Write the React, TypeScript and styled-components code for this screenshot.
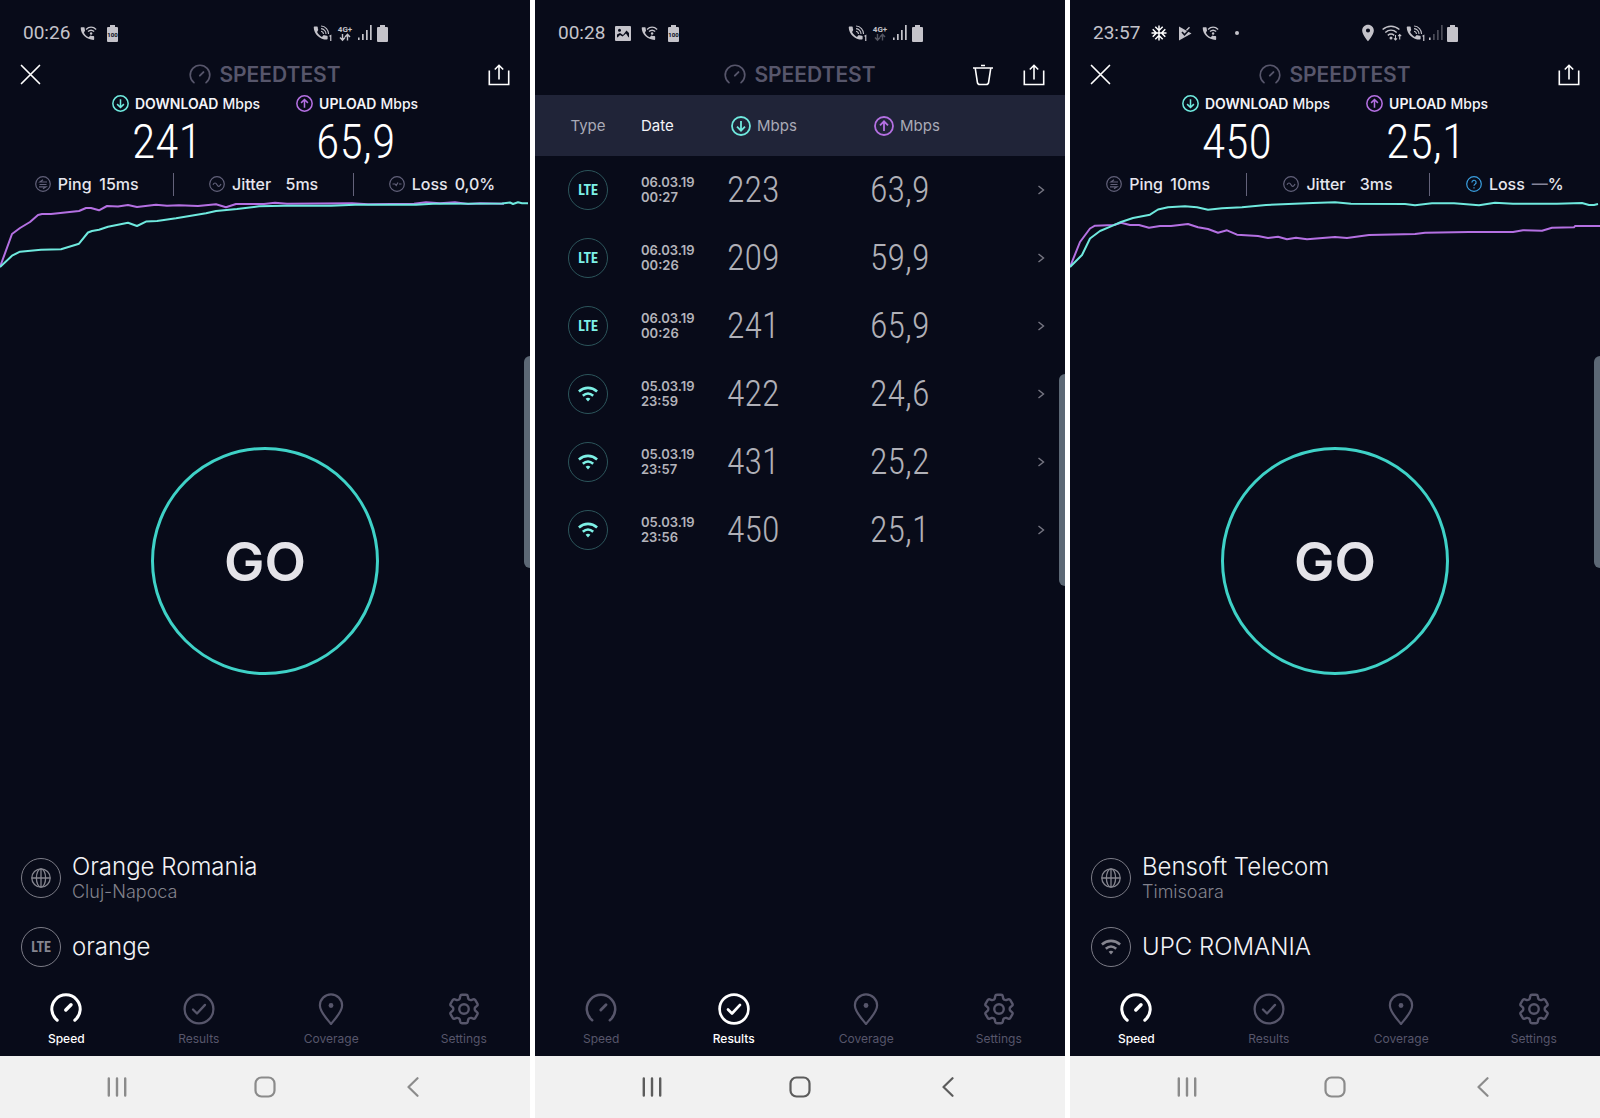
import React from 'react';
import styled, { createGlobalStyle } from 'styled-components';
import { MdAcUnit, MdLocationOn } from 'react-icons/md';
import { HiOutlineCog6Tooth } from 'react-icons/hi2';

const color = {
  bg: '#080b19',
  band: '#202438',
  muted: '#57566b',
  text: '#e6e6ee',
  teal: '#6fe9de',
  purple: '#b470e2',
};

const digits = `"Roboto Condensed", "Liberation Sans Narrow", Roboto, sans-serif`;

const GlobalStyle = createGlobalStyle`
  * { box-sizing: border-box; }
  body {
    margin: 0;
    background: #ffffff;
    font-family: Inter, "Open Sans", sans-serif;
  }
  button {
    padding: 0;
    border: 0;
    background: none;
    color: inherit;
    font: inherit;
    cursor: pointer;
  }
  svg { display: block; flex: none; }
`;

const Board = styled.main`
  display: grid;
  grid-template-columns: repeat(3, minmax(0, 1fr));
  gap: 5px;
  min-height: 100vh;
`;

const Phone = styled.section`
  position: relative;
  display: flex;
  flex-direction: column;
  background: ${color.bg};
  color: ${color.text};
`;

const EdgeHandle = styled.span<{ $top: number }>`
  position: absolute;
  right: 0;
  top: ${(p) => p.$top}px;
  width: 6px;
  height: 212px;
  border-radius: 6px 0 0 6px;
  background: #5c6875;
`;

const StatusBar = styled.div`
  display: flex;
  align-items: center;
  justify-content: space-between;
  height: 54px;
  padding: 12px 142px 0 23px;
  color: #c4c3ca;
`;

const StatusGroup = styled.div<{ $gap: number }>`
  display: flex;
  align-items: center;
  gap: ${(p) => p.$gap}px;
`;

const Clock = styled.time`
  font: 400 19px/24px Roboto, sans-serif;
`;

const Dot = styled.span`
  width: 4px;
  height: 4px;
  margin-left: 6px;
  border-radius: 50%;
  background: currentColor;
`;

const TopBar = styled.header`
  display: grid;
  grid-template-columns: 1fr auto 1fr;
  align-items: center;
  height: 41px;
  padding: 0 20px;
  color: #ffffff;
`;

const Brand = styled.h1`
  display: flex;
  align-items: center;
  gap: 8px;
  margin: 0;
  color: ${color.muted};
  font-size: 21px;
  line-height: 24px;
  font-weight: 600;
`;

const Actions = styled.div`
  display: flex;
  justify-content: flex-end;
  gap: 29px;
`;

const IconButton = styled.button`
  display: flex;
  justify-self: start;
`;

const Speeds = styled.div`
  display: flex;
  justify-content: center;
  gap: 36px;
`;

const SpeedLabel = styled.div`
  display: flex;
  align-items: center;
  gap: 6px;
  color: #f4f4f8;
  font-size: 14px;
  line-height: 17px;
  font-weight: 500;
`;

const LabelText = styled.span`
  display: flex;
  gap: 4px;
`;

const Name = styled.span`
  font-weight: 600;
`;

const SpeedValue = styled.div`
  padding-left: 20px;
  color: #ffffff;
  font-family: ${digits};
  font-size: 48px;
  line-height: 60px;
  font-weight: 300;
`;

const Stats = styled.div`
  display: flex;
  align-items: center;
  justify-content: space-evenly;
  height: 28px;
  padding-bottom: 4px;
  font-size: 16px;
  line-height: 20px;
  font-weight: 500;
`;

const Stat = styled.div`
  display: flex;
  align-items: center;
  gap: 7px;
`;

const StatValue = styled.span<{ $timed?: boolean }>`
  min-width: ${(p) => (p.$timed ? 40 : 0)}px;
  text-align: right;
`;

const Missing = styled.span`
  color: #85859a;
`;

const Divider = styled.span`
  width: 1px;
  height: 23px;
  background: #63627a;
`;

const Chart = styled.svg`
  width: 100%;
  height: 70px;
`;

const GoArea = styled.div`
  display: flex;
  flex: 1;
  align-items: center;
  justify-content: center;
`;

const GoButton = styled.button`
  width: 228px;
  height: 228px;
  border: 3px solid #3fd2c7;
  border-radius: 50%;
  color: #e5e4e9;
  font-size: 54px;
  font-weight: 600;
`;

const Providers = styled.div`
  display: flex;
  flex-direction: column;
  gap: 18px;
  padding: 0 21px;
`;

const Provider = styled.div`
  display: flex;
  align-items: center;
  gap: 11px;
  height: 52px;

  & + & {
    height: 50px;
  }
`;

const Badge = styled.span<{ $tone: 'teal' | 'grey' }>`
  display: inline-flex;
  align-items: center;
  justify-content: center;
  width: 40px;
  height: 40px;
  border: 1px solid ${(p) => (p.$tone === 'teal' ? '#2c555b' : '#7c7c87')};
  border-radius: 50%;
  color: ${(p) => (p.$tone === 'teal' ? '#7df0e6' : '#85858f')};
  font: 700 14px/20px ${digits};
`;

const ProviderName = styled.div`
  color: #f2f2f5;
  font-size: 24px;
  line-height: 28px;
  font-weight: 300;
`;

const ProviderCity = styled.div`
  color: #82828c;
  font-size: 18px;
  line-height: 22px;
  font-weight: 300;
`;

const Tabs = styled.nav`
  display: grid;
  grid-template-columns: repeat(4, 1fr);
  height: 84px;
`;

const Tab = styled.button<{ $active: boolean }>`
  display: flex;
  flex-direction: column;
  align-items: center;
  gap: 6px;
  padding-top: 21px;
  color: ${(p) => (p.$active ? '#ffffff' : color.muted)};
  font-size: 12px;
  line-height: 16px;
  font-weight: ${(p) => (p.$active ? 500 : 400)};
`;

const TabGlyph = styled.span`
  display: flex;
  align-items: center;
  justify-content: center;
  width: 32px;
  height: 32px;
`;

const SystemBar = styled.nav<{ $dark: boolean }>`
  display: flex;
  align-items: center;
  justify-content: center;
  height: 62px;
  background: #f1f1f1;
  color: ${(p) => (p.$dark ? '#5c5c5c' : '#8b8b8b')};
`;

const SystemButton = styled.button`
  display: flex;
  align-items: center;
  justify-content: center;
  width: 148px;
  height: 62px;
`;

const Results = styled.div`
  flex: 1;
`;

const Table = styled.table`
  width: 100%;
  border-collapse: collapse;
  table-layout: fixed;
`;

const HeadRow = styled.tr`
  height: 61px;
  background: ${color.band};
`;

const HeadCell = styled.th<{ $width?: number; $center?: boolean; $strong?: boolean }>`
  width: ${(p) => (p.$width ? `${p.$width}px` : 'auto')};
  padding: 0;
  color: ${(p) => (p.$strong ? '#f4f4f8' : '#a9aab6')};
  font-size: 15px;
  font-weight: 400;
  text-align: ${(p) => (p.$center ? 'center' : 'left')};
`;

const HeadUnit = styled.span`
  display: flex;
  align-items: center;
  gap: 6px;
  padding-left: 4px;
`;

const Row = styled.tr`
  height: 68px;
`;

const Cell = styled.td<{ $center?: boolean }>`
  padding: 0;
  text-align: ${(p) => (p.$center ? 'center' : 'left')};
  vertical-align: middle;
`;

const DateCell = styled(Cell)`
  color: #b4b4bb;
  font-size: 13px;
  line-height: 15px;
  font-weight: 600;
`;

const ValueCell = styled(Cell)`
  color: #b0b0b7;
  font-family: ${digits};
  font-size: 36px;
  line-height: 40px;
  font-weight: 300;
`;

const OpenButton = styled.button`
  display: flex;
  margin-left: auto;
  margin-right: 20px;
  color: #777783;
`;

/* ---------- icons ---------- */

const Gauge = ({ size, width }: { size: number; width: number }) => (
  <svg width={size} height={size} viewBox="0 0 32 32" fill="none" stroke="currentColor" strokeWidth={width} strokeLinecap="round">
    <path d="M7.2 27.2A14.2 14.2 0 1 1 24.8 27.2" />
    <path d="M15.8 17l5.2-5.2" strokeWidth={width * 1.15} />
  </svg>
);

const CheckCircle = ({ width }: { width: number }) => (
  <svg width="32" height="32" viewBox="0 0 32 32" fill="none" stroke="currentColor" strokeWidth={width} strokeLinecap="round" strokeLinejoin="round">
    <circle cx="16" cy="16" r="14.4" />
    <path d="M10 16.500l4 4 8-8.600" />
  </svg>
);

const CoveragePin = () => (
  <svg width="32" height="32" viewBox="0 0 32 32" fill="none" stroke="currentColor" strokeWidth="2.200" strokeLinejoin="round">
    <path d="M16 31C12.500 26.500 4.900 19 4.900 12.500a11.100 11.100 0 0 1 22.200 0C27.100 19 19.500 26.500 16 31z" />
    <circle cx="16" cy="12.500" r="2.400" fill="currentColor" stroke="none" />
  </svg>
);

const CloseIcon = () => (
  <svg width="21" height="21" viewBox="0 0 21 21" stroke="currentColor" strokeWidth="1.700" strokeLinecap="round">
    <path d="M1.500 1.500l18 18M19.500 1.500l-18 18" />
  </svg>
);

const ShareIcon = () => (
  <svg width="22" height="22" viewBox="0 0 22 22" fill="none" stroke="currentColor" strokeWidth="1.600">
    <path d="M1.300 6.500v14h19.400v-14M11 15.500V1.500M6.800 5.500L11 1.300l4.200 4.200" />
  </svg>
);

const TrashIcon = () => (
  <svg width="22" height="22" viewBox="0 0 22 22" fill="none" stroke="currentColor" strokeWidth="1.600">
    <path d="M1 4h20M9 1.500h4M3.200 4l2.200 14.400a2.400 2.400 0 0 0 2.400 2.100h6.400a2.400 2.400 0 0 0 2.400-2.100L18.800 4" />
  </svg>
);

const Arrow = ({ up, size }: { up?: boolean; size: number }) => (
  <svg width={size} height={size} viewBox="0 0 20 20" fill="none" stroke={up ? color.purple : color.teal} strokeWidth="1.800">
    <circle cx="10" cy="10" r="9" />
    <path d={up ? 'M10 15V5.500M6 9.300l4-4 4 4' : 'M10 5v9.500M6 10.700l4 4 4-4'} />
  </svg>
);

type StatKind = 'ping' | 'jitter' | 'loss' | 'unknown';

const statPath: Record<StatKind, string> = {
  ping: 'M12 6H5l3-2.200M4.500 8.500h7M4 10.800h7l-3 2',
  jitter: 'M4 8.800c1.300-2.400 2.700-2.400 4 0s2.700 1.900 4-.8',
  loss: 'M3.500 8H6l1.200 1.500L9 6.500M10 8h2.500',
  unknown: 'M5.900 6.400a2.100 2.100 0 1 1 3.100 1.800c-.7.400-1 .8-1 1.600M8 11.200v1.200',
};

const StatIcon = ({ kind }: { kind: StatKind }) => (
  <svg width="16" height="16" viewBox="0 0 16 16" fill="none" stroke={kind === 'unknown' ? '#3a9fe0' : '#62617a'} strokeWidth="1.200">
    <circle cx="8" cy="8" r="7.300" />
    <path d={statPath[kind]} />
  </svg>
);

const Globe = () => (
  <svg width="20" height="20" viewBox="0 0 20 20" fill="none" stroke="currentColor" strokeWidth="1.300">
    <circle cx="10" cy="10" r="9.200" />
    <ellipse cx="10" cy="10" rx="4.600" ry="9.200" />
    <path d="M10 .8v18.400M.8 10h18.400" />
  </svg>
);

const Wifi = () => (
  <svg width="20" height="16" viewBox="0 0 20 16" fill="none" stroke="currentColor" strokeWidth="2.600">
    <path d="M.9 5.400c5.400-4.700 12.800-4.700 18.200 0M4.800 9.700c3.200-2.700 7.200-2.700 10.400 0" />
    <path d="M7.600 12.800c1.500-1.300 3.300-1.300 4.800 0L10 15.600z" fill="currentColor" stroke="none" />
  </svg>
);

const Battery = ({ label }: { label?: string }) => (
  <svg width="11" height="17" viewBox="0 0 11 17">
    <path d="M3 0h5v2h2a1 1 0 0 1 1 1v13a1 1 0 0 1-1 1H1a1 1 0 0 1-1-1V3a1 1 0 0 1 1-1h2z" fill="currentColor" />
    {label && (
      <text x="5.500" y="11.500" textAnchor="middle" fontFamily="Roboto, sans-serif" fontSize="6" fontWeight="700" fill={color.bg}>
        {label}
      </text>
    )}
  </svg>
);

const handset =
  'M5.600 10.800c1.400 2.800 3.800 5.100 6.600 6.600l2.200-2.200c.3-.3.700-.4 1-.2 1.100.4 2.300.6 3.600.6.500 0 1 .4 1 1V20c0 .6-.5 1-1 1C9.600 21 1 13.400 1 4c0-.6.500-1 1-1h3.500c.6 0 1 .4 1 1 0 1.200.2 2.400.6 3.600.1.300 0 .7-.3 1z';

const WifiCall = () => (
  <svg width="17" height="17" viewBox="0 0 24 24" fill="none" stroke="currentColor" strokeWidth="1.900">
    <path d={handset} fill="currentColor" stroke="none" />
    <path d="M8.500 6.200c4.300-4 10-4 14.300 0M11.300 9.300c2.700-2.300 6-2.300 8.700 0" />
    <circle cx="15.700" cy="12" r="1.700" fill="currentColor" stroke="none" />
  </svg>
);

const CallOne = () => (
  <svg width="19" height="18" viewBox="0 0 26 24" fill="none" stroke="currentColor" strokeWidth="1.500">
    <path d={handset} fill="currentColor" stroke="none" />
    <path d="M11 9.500a4 4 0 0 1 3.300 4M11 6a7.300 7.300 0 0 1 6.800 7.500M11 2.500A10.600 10.600 0 0 1 21.300 13.500" />
    <path d="M22.500 16.500l1.800-1V23" strokeWidth="1.700" />
  </svg>
);

const DataArrows = ({ dim }: { dim?: boolean }) => (
  <svg width="16" height="18" viewBox="0 0 16 18">
    <text x="8" y="7.500" textAnchor="middle" fontFamily="Roboto, sans-serif" fontSize="8" fontWeight="700" fill="currentColor">
      4G+
    </text>
    <path d="M5.500 10v6M3 13.500L5.500 16.200 8 13.500M10.500 16.500v-6M8 13l2.500-2.700L13 13" fill="none" stroke="currentColor" strokeWidth="1.400" opacity={dim ? 0.4 : 1} />
  </svg>
);

const Signal = ({ weak }: { weak?: boolean }) => (
  <svg width="14" height="16" viewBox="0 0 14 16" fill="currentColor">
    <rect x="0" y="12.500" width="1.600" height="2.500" />
    <g opacity={weak ? 0.35 : 1}>
      <rect x="4" y="9" width="1.700" height="6" />
      <rect x="8" y="5" width="1.700" height="10" />
      <rect x="12" y="0" width="1.700" height="15" />
    </g>
  </svg>
);

const WifiTraffic = () => (
  <svg width="20" height="16" viewBox="0 0 20 16" fill="none" stroke="currentColor" strokeWidth="1.500">
    <path d="M.6 4.500c5-4.500 11.800-4.500 16.800 0M3.300 7.500c3.400-3 8-3 11.400 0M5.800 10.300c2-1.600 4.400-1.600 6.400 0" />
    <circle cx="9" cy="13" r="1.500" fill="currentColor" stroke="none" />
    <path d="M13.500 10v5M12 13.300l1.500 1.700 1.500-1.700M17.700 14.500v-5M16.200 11.200l1.500-1.700 1.500 1.700" strokeWidth="1.100" />
  </svg>
);

const Picture = () => (
  <svg width="16" height="15" viewBox="0 0 16 15">
    <rect width="16" height="15" rx="1" fill="currentColor" />
    <circle cx="4.500" cy="4.200" r="1.500" fill={color.bg} />
    <path d="M2 11.500V8.500L5 7l3 2 3.500-4.500L14 7v4.500z" fill={color.bg} />
    <path d="M2 12l3-3 2.500 1.500L11 7.500l3 4.500z" fill="currentColor" />
  </svg>
);

const PlayCheck = () => (
  <svg width="14" height="15" viewBox="0 0 14 15">
    <path d="M1 .5L13.500 7.500 1 14.500z" fill="currentColor" />
    <path d="M4 6l2.500 2.800L12.500 2.500" fill="none" stroke={color.bg} strokeWidth="1.600" />
    <path d="M8.500 4.200l3-3" fill="none" stroke="currentColor" strokeWidth="1.500" />
  </svg>
);

const Chevron = () => (
  <svg width="8" height="10" viewBox="0 0 8 10" fill="none" stroke="currentColor" strokeWidth="1.400">
    <path d="M1.500 1L6.500 5l-5 4" />
  </svg>
);

/* ---------- shared parts ---------- */

const Logo = () => (
  <Brand>
    <Gauge size={22} width={2.4} />
    SPEEDTEST
  </Brand>
);

const tabs = ['Speed', 'Results', 'Coverage', 'Settings'] as const;
type TabName = (typeof tabs)[number];

const TabIcon = ({ name, active }: { name: TabName; active: boolean }) => {
  if (name === 'Speed') return <Gauge size={32} width={active ? 3 : 2.5} />;
  if (name === 'Results') return <CheckCircle width={active ? 2.7 : 2.3} />;
  if (name === 'Coverage') return <CoveragePin />;
  return <HiOutlineCog6Tooth size={38} strokeWidth={1.5} />;
};

const BottomTabs = ({ active }: { active: TabName }) => (
  <Tabs>
    {tabs.map((name) => (
      <Tab key={name} $active={name === active}>
        <TabGlyph>
          <TabIcon name={name} active={name === active} />
        </TabGlyph>
        {name}
      </Tab>
    ))}
  </Tabs>
);

const SystemNav = ({ dark = false }: { dark?: boolean }) => (
  <SystemBar $dark={dark}>
    <SystemButton aria-label="Recent apps">
      <svg width="20" height="20" viewBox="0 0 20 20" stroke="currentColor" strokeWidth="2.400" strokeLinecap="round">
        <path d="M1.800 1.500v17M10 1.500v17M18.200 1.500v17" />
      </svg>
    </SystemButton>
    <SystemButton aria-label="Home">
      <svg width="22" height="22" viewBox="0 0 22 22" fill="none" stroke="currentColor" strokeWidth="2.200">
        <rect x="1.500" y="1.500" width="19" height="19" rx="6" />
      </svg>
    </SystemButton>
    <SystemButton aria-label="Back">
      <svg width="12" height="20" viewBox="0 0 12 20" fill="none" stroke="currentColor" strokeWidth="2.200" strokeLinecap="round" strokeLinejoin="round">
        <path d="M10.500 1.200L1.500 10l9 8.800" />
      </svg>
    </SystemButton>
  </SystemBar>
);

const ConnectionBadge = ({ type, tone }: { type: 'lte' | 'wifi'; tone: 'teal' | 'grey' }) => (
  <Badge $tone={tone}>{type === 'lte' ? 'LTE' : <Wifi />}</Badge>
);

/* ---------- speed screen ---------- */

interface SpeedScreenProps {
  status: React.ReactNode;
  download: string;
  upload: string;
  ping: string;
  jitter: string;
  loss?: string;
  upLine: string;
  downLine: string;
  server: string;
  city: string;
  network: string;
  type: 'lte' | 'wifi';
}

const SpeedScreen = (p: SpeedScreenProps) => (
  <Phone>
    {p.status}
    <TopBar>
      <IconButton aria-label="Close"><CloseIcon /></IconButton>
      <Logo />
      <Actions>
        <IconButton aria-label="Share"><ShareIcon /></IconButton>
      </Actions>
    </TopBar>
    <Speeds>
      <div>
        <SpeedLabel><Arrow size={17} /><LabelText><Name>DOWNLOAD</Name>Mbps</LabelText></SpeedLabel>
        <SpeedValue>{p.download}</SpeedValue>
      </div>
      <div>
        <SpeedLabel><Arrow up size={17} /><LabelText><Name>UPLOAD</Name>Mbps</LabelText></SpeedLabel>
        <SpeedValue>{p.upload}</SpeedValue>
      </div>
    </Speeds>
    <Stats>
      <Stat><StatIcon kind="ping" />Ping <StatValue $timed>{p.ping}</StatValue></Stat>
      <Divider />
      <Stat><StatIcon kind="jitter" />Jitter <StatValue $timed>{p.jitter}</StatValue></Stat>
      <Divider />
      <Stat>
        <StatIcon kind={p.loss ? 'loss' : 'unknown'} />Loss
        <StatValue>{p.loss ?? <><Missing>—</Missing>%</>}</StatValue>
      </Stat>
    </Stats>
    <Chart viewBox="0 0 530 70" preserveAspectRatio="none" fill="none" strokeWidth="2" strokeLinejoin="round">
      <polyline points={p.upLine} stroke={color.purple} vectorEffect="non-scaling-stroke" />
      <polyline points={p.downLine} stroke={color.teal} vectorEffect="non-scaling-stroke" />
    </Chart>
    <GoArea><GoButton>GO</GoButton></GoArea>
    <Providers>
      <Provider>
        <Badge $tone="grey"><Globe /></Badge>
        <div>
          <ProviderName>{p.server}</ProviderName>
          <ProviderCity>{p.city}</ProviderCity>
        </div>
      </Provider>
      <Provider>
        <ConnectionBadge type={p.type} tone="grey" />
        <ProviderName>{p.network}</ProviderName>
      </Provider>
    </Providers>
    <BottomTabs active="Speed" />
    <SystemNav />
    <EdgeHandle $top={356} />
  </Phone>
);

/* ---------- results screen ---------- */

const results = [
  { type: 'lte', date: '06.03.19', time: '00:27', down: '223', up: '63,9' },
  { type: 'lte', date: '06.03.19', time: '00:26', down: '209', up: '59,9' },
  { type: 'lte', date: '06.03.19', time: '00:26', down: '241', up: '65,9' },
  { type: 'wifi', date: '05.03.19', time: '23:59', down: '422', up: '24,6' },
  { type: 'wifi', date: '05.03.19', time: '23:57', down: '431', up: '25,2' },
  { type: 'wifi', date: '05.03.19', time: '23:56', down: '450', up: '25,1' },
] as const;

const ResultsScreen = () => (
  <Phone>
    <StatusBar>
      <StatusGroup $gap={10}>
        <Clock>00:28</Clock>
        <Picture />
        <WifiCall />
        <Battery label="100" />
      </StatusGroup>
      <StatusGroup $gap={5}><CallOne /><DataArrows dim /><Signal /><Battery /></StatusGroup>
    </StatusBar>
    <TopBar>
      <span />
      <Logo />
      <Actions>
        <IconButton aria-label="Delete results"><TrashIcon /></IconButton>
        <IconButton aria-label="Share"><ShareIcon /></IconButton>
      </Actions>
    </TopBar>
    <Results>
      <Table>
        <thead>
          <HeadRow>
            <HeadCell $width={106} $center>Type</HeadCell>
            <HeadCell $width={86} $strong>Date</HeadCell>
            <HeadCell $width={143}><HeadUnit><Arrow size={20} />Mbps</HeadUnit></HeadCell>
            <HeadCell $width={143}><HeadUnit><Arrow up size={20} />Mbps</HeadUnit></HeadCell>
            <HeadCell aria-label="Open" />
          </HeadRow>
        </thead>
        <tbody>
          {results.map((r) => (
            <Row key={r.date + r.time + r.down}>
              <Cell $center><ConnectionBadge type={r.type} tone="teal" /></Cell>
              <DateCell>{r.date}<br />{r.time}</DateCell>
              <ValueCell>{r.down}</ValueCell>
              <ValueCell>{r.up}</ValueCell>
              <Cell><OpenButton aria-label="Open result"><Chevron /></OpenButton></Cell>
            </Row>
          ))}
        </tbody>
      </Table>
    </Results>
    <BottomTabs active="Results" />
    <SystemNav dark />
    <EdgeHandle $top={374} />
  </Phone>
);

const lteUp =
  '0,67 12,34 20,28 30,22 38,15 42,14 51,14 79,11 86,8 91,8 99,10.3 107,6 118,6.5 128,5 137,7 156,4.7 167,5.700 179,5.300 198,6 216,4.300 226,7.300 236,4 264,4 275,2.700 287,3.700 352,3.300 368,4.300 414,3.700 426,2.300 440,3.200 455,2.300 468,4 480,3.300 504,3.700';
const lteDown =
  '0,67 12,55.700 20,51.700 41,49.700 61,49.300 75,45 79,43.700 88,32.500 92,31 99,29.700 108,26.700 128,22.700 137,26 146,21.600 157,21 176,18.300 206,13.300 216,11 237,9 259,6.300 284,5.700 331,5.700 355,4.700 416,4.700 433,3.700 502,3.500 510,2.500 513,4 518,2.300 522,3.300 528,3.300';
const wifiUp =
  '0,67 10,42 20,28.500 25,25.700 44,25 51,22.700 60,25 69,25 79,27.700 90,26 101,26 118,24 128,27.300 138,29 148,32.700 157,30.300 167,34.700 188,36 198,38 208,36.700 217,39.300 226,37.700 237,39.300 265,37 277,38 299,35 345,34 355,32.700 399,32 443,32 453,30.300 472,30.700 482,27.700 504,27.300 505,26 530,26';
const wifiDown =
  '0,67 4,63 12,55 20,38.500 30,31 41,26.300 51,22 63,18 80,14.700 88,9.500 98,7.300 115,6.300 127,7.300 138,9.700 152,8.300 172,7.300 196,5 243,3 265,2.300 281,3.700 335,4 345,5.300 362,3.300 384,3.300 409,5.300 425,2.700 443,3.700 487,3.700 512,3 519,5 524,5 528,4';

export default function App() {
  return (
    <>
      <GlobalStyle />
      <Board>
        <SpeedScreen
          status={
            <StatusBar>
              <StatusGroup $gap={10}>
                <Clock>00:26</Clock>
                <WifiCall />
                <Battery label="100" />
              </StatusGroup>
              <StatusGroup $gap={5}><CallOne /><DataArrows /><Signal /><Battery /></StatusGroup>
            </StatusBar>
          }
          download="241"
          upload="65,9"
          ping="15ms"
          jitter="5ms"
          loss="0,0%"
          upLine={lteUp}
          downLine={lteDown}
          server="Orange Romania"
          city="Cluj-Napoca"
          network="orange"
          type="lte"
        />
        <ResultsScreen />
        <SpeedScreen
          status={
            <StatusBar>
              <StatusGroup $gap={10}>
                <Clock>23:57</Clock>
                <MdAcUnit size={18} color="#ffffff" />
                <PlayCheck />
                <WifiCall />
                <Dot />
              </StatusGroup>
              <StatusGroup $gap={4}>
                <MdLocationOn size={20} />
                <WifiTraffic />
                <CallOne />
                <Signal weak />
                <Battery />
              </StatusGroup>
            </StatusBar>
          }
          download="450"
          upload="25,1"
          ping="10ms"
          jitter="3ms"
          upLine={wifiUp}
          downLine={wifiDown}
          server="Bensoft Telecom"
          city="Timisoara"
          network="UPC ROMANIA"
          type="wifi"
        />
      </Board>
    </>
  );
}
